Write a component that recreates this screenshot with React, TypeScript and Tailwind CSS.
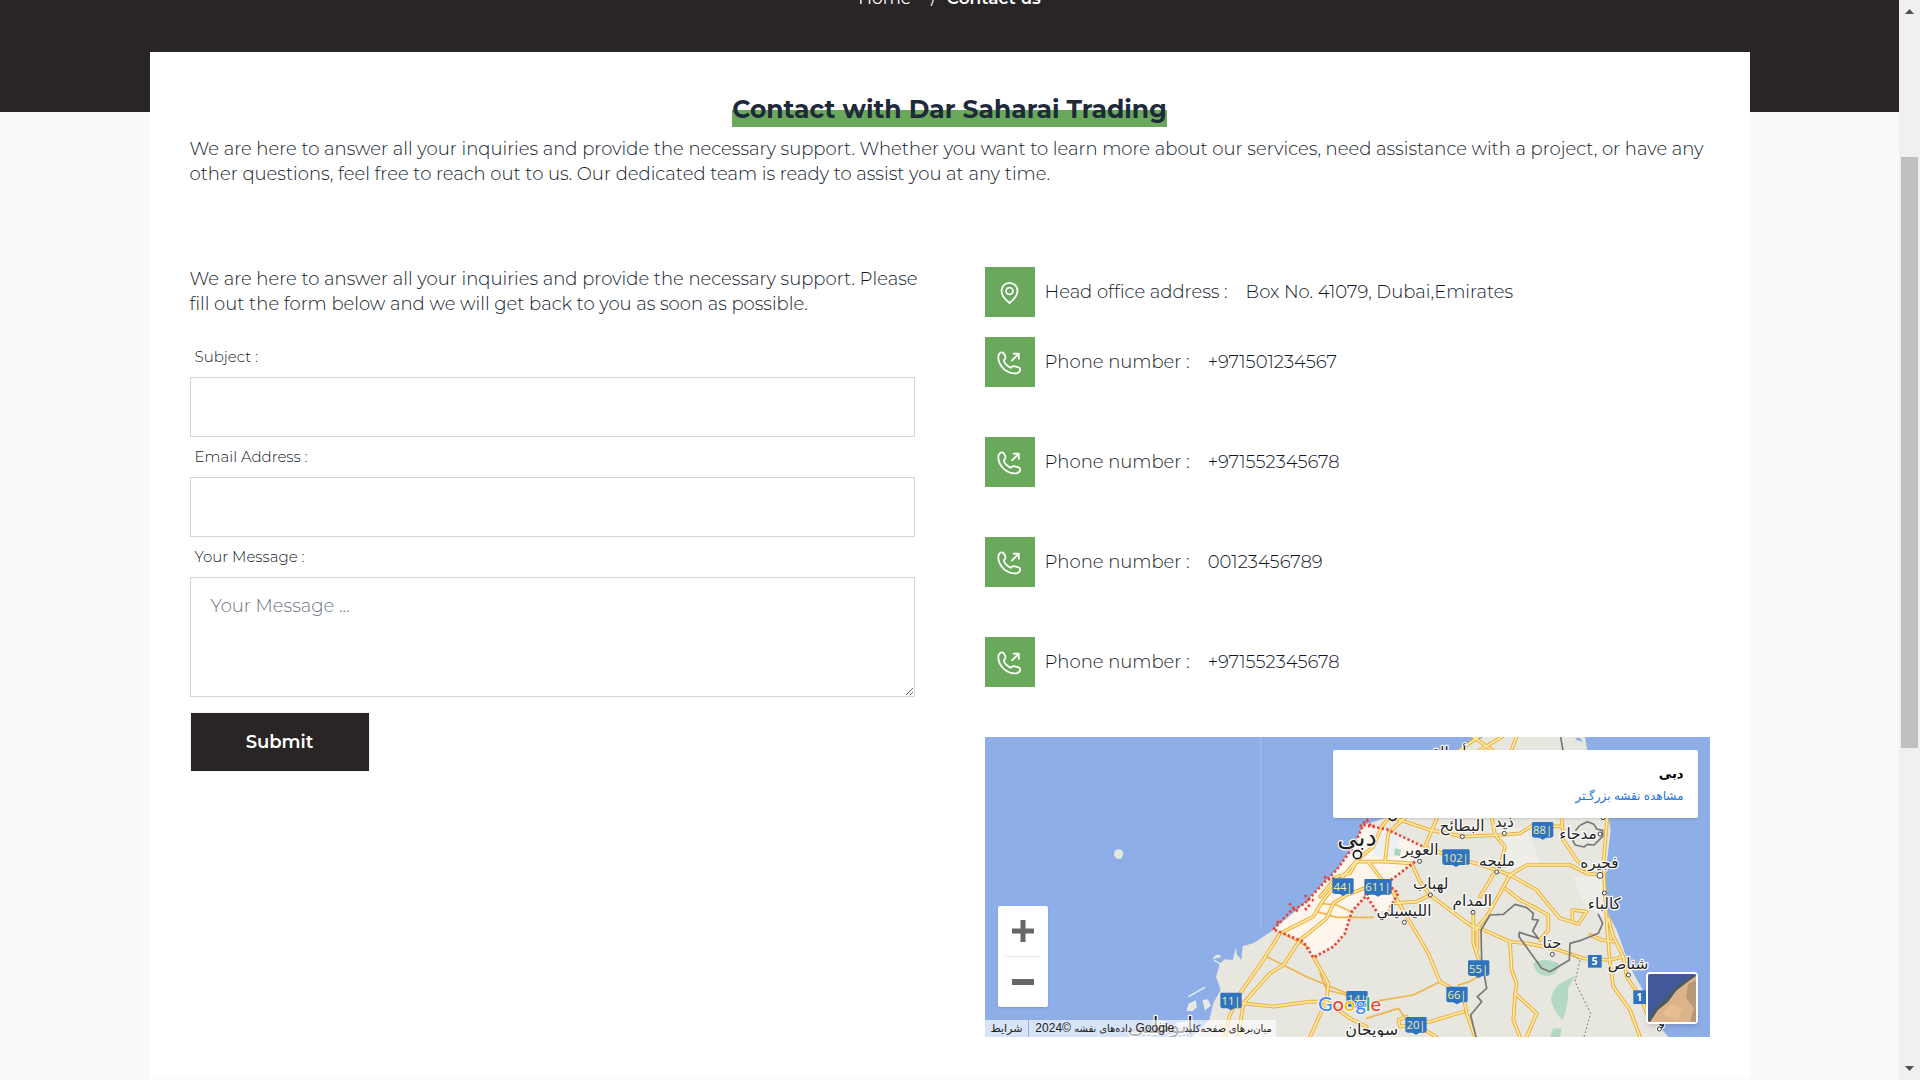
import React from "react";

const phones = ["+971501234567", "+971552345678", "00123456789", "+971552345678"];

const land =
  "M490 21 L400 70 L290 180 L195 265 L130 285 L100 350 L50 420 L0 470 L-45 520 L-140 600 L-200 640 L-232 648 L-236 690 L-250 672 L-252 650 L-262 690 L-285 688 L-300 700 L-312 740 L-298 780 L-320 820 L-332 870 L-385 921 L1045 921 L1010 880 L980 800 L940 730 L915 670 L890 600 L858 540 L858 420 L872 300 L866 265 L830 150 L802 62 L795 21 Z";

const highways = [
  "M-285 921 L-272 860 L-240 790 L-170 690 L-120 610 L-20 560 L10 510 L60 450 L110 392 L160 350 L185 290 L240 220",
  "M-245 921 L-230 820 L-150 730 L-110 705 L-60 630 L20 565 L40 520 L80 495 L140 472",
  "M110 395 L195 395 L275 400 L300 455 L330 495",
  "M195 395 L205 310 L255 262",
  "M145 395 L190 455",
  "M0 500 L50 440 L90 430 L110 395",
  "M215 480 L260 560 L290 610 L325 670 L360 755 L430 795 L440 850 L465 921",
  "M215 262 L330 300 L430 320 L540 315 L600 310 L640 285 L725 290",
  "M352 262 L315 350 L380 375 L500 410 L570 435 L620 405 L750 405 L800 430 L840 435",
  "M515 262 L525 315 L555 350 L545 390 L510 450 L480 500",
  "M570 435 L545 480 L500 560 L465 600",
  "M570 435 L650 480 L690 530 L720 565 L775 582 L800 545 L757 540 L757 570",
  "M555 475 L600 510 L640 530 L685 555 L685 600 L660 630",
  "M725 262 L730 330 L770 390 L800 420",
  "M862 262 L850 400 L855 490 L862 600 L870 700 L880 770 L930 840 L960 921",
  "M910 680 L870 690 L790 685 L700 655 L620 640 L570 635 L480 595 L450 585 L330 495 L290 515 L220 520",
  "M570 635 L575 720 L590 760 L585 800 L580 870 L600 921",
  "M585 790 L650 850 L620 921",
  "M460 550 L460 640 L480 700",
  "M472 590 L472 660",
  "M865 565 L880 620 L910 680 L920 740 L960 800 L990 870",
  "M810 615 L845 630 L880 635",
  "M-20 680 L25 760 L20 810 L-30 921",
  "M-230 820 L-140 830 L-30 815 L20 815 L90 865 L140 890",
  "M430 845 L330 875 L240 890 L235 870 L260 860",
  "M280 880 L350 921",
  "M370 90 L420 60 L475 21",
  "M440 90 L480 60 L545 21",
  "M460 21 L530 70",
  "M570 70 L590 21",
];

const sideRoads = [
  "M-160 680 L-40 740 L80 790",
  "M-120 605 L-30 655",
  "M360 755 L280 795 L160 815",
  "M415 765 L450 755 L480 735",
  "M140 865 L235 835 L260 870 L290 910",
  "M0 730 L20 780 L80 795",
  "M0 520 L50 525 L100 548",
  "M-10 545 L50 562 L160 562",
];

const border =
  "M468 921 L452 855 L485 815 L472 800 L500 775 L485 690 L483 600 L510 555 L550 553 L585 523 L620 533 L640 550 L637 568 L655 570 L638 603 L655 625 L598 607 L597 620 L665 715 L690 725 L748 690 L750 640 L780 632 L835 610 L848 580 L835 553";

const shields = [
  { x: 69, y: 470, text: "44|" },
  { x: 174, y: 472, text: "611|" },
  { x: 408, y: 383, text: "102|" },
  { x: 668, y: 301, text: "88|" },
  { x: 476, y: 716, text: "55|" },
  { x: 411, y: 795, text: "66|" },
  { x: 288, y: 886, text: "20|" },
  { x: 111, y: 808, text: "14|" },
  { x: -267, y: 813, text: "11|" },
];

const places = [
  { x: 426, y: 304, text: "البطائح", dot: [427, 320] },
  { x: 553, y: 292, text: "ذيد", dot: [553, 310] },
  { x: 774, y: 328, text: "مدحاء", dot: [840, 312] },
  { x: 300, y: 375, text: "العوير", dot: [299, 394] },
  { x: 531, y: 408, text: "مليحه", dot: [530, 426] },
  { x: 838, y: 413, text: "فجيره", dot: [840, 436] },
  { x: 332, y: 476, text: "لهباب", dot: [331, 495] },
  { x: 457, y: 528, text: "المدام", dot: [459, 547] },
  { x: 853, y: 537, text: "كالباء", dot: [853, 489] },
  { x: 252, y: 558, text: "الليسيلي", dot: [253, 577] },
  { x: 696, y: 654, text: "حتا", dot: [697, 673] },
  { x: 924, y: 716, text: "شناص", dot: [925, 735] },
];

const Shield = ({ x, y, text }: { x: number; y: number; text: string }) => {
  const half = text.length > 3 ? 41 : 32;
  return (
    <g>
      <path
        d={`M${x - half} ${y - 22} q0 -3 4 -3 h${half * 2 - 8} q4 0 4 3 v36 q0 8 -9 8 h-${half - 20} l-11 6 l-11 -6 h-${half - 20} q-9 0 -9 -8 z`}
        fill="#2f74c0"
      />
      <text x={x} y={y + 12} fill="#f2ec9a" fontSize="34" fontWeight="500" textAnchor="middle">
        {text}
      </text>
    </g>
  );
};

const MapDrawing = () => (
  <svg
    viewBox="-1005 21 2175 900"
    preserveAspectRatio="xMidYMid slice"
    className="block h-full w-full font-['Open_Sans','DejaVu_Sans',sans-serif]"
  >
    <rect x="-1005" y="21" width="2175" height="900" fill="#8eaee8" />
    <path d="M-178 21 V600" stroke="#a3bdec" strokeWidth="3" />
    <path d="M-616 362 l8 -4 l14 2 l4 12 l-6 14 l-14 0 l-8 -10 z" fill="#e4e6e0" />
    <path d={land} fill="#e7e6df" />
    <path d="M530 300 L620 290 L660 400 L560 420 Z M760 440 L850 440 L850 560 L790 520 Z" fill="#efede7" />
    <path
      d="M-398 840 l6 -18 l18 -8 l2 18 l-12 10 z M-350 812 l12 -2 l8 16 l-14 12 z M-395 800 l50 -28 M-320 686 q14 -18 22 -4 M-318 690 l30 20 M-430 880 l40 -6 l10 10 l-30 14 z M-490 876 l30 0"
      fill="#e7e6df"
      stroke="#e9efef"
      strokeWidth="4"
    />
    <path d="M765 25 l14 -2 l10 12 l-18 -4 z" fill="#8eaee8" />

    {/* reserves */}
    <g fill="#b3d9c4">
      <path d="M640 700 q30 -20 75 0 q5 30 -30 38 q-40 0 -45 -38 z" />
      <path d="M765 738 q-10 20 -22 40 q5 40 -15 92 q-25 -20 -35 -60 q5 -40 35 -55 z" />
      <path d="M700 895 l25 0 l-5 26 h-30 z" />
    </g>

    {/* Dubai emirate */}
    <path
      d="M130 285 L200 298 L310 350 L285 395 L200 460 L235 490 L205 540 L170 545 L135 495 L95 545 L75 610 L40 650 L-20 683 L-50 635 L-140 598 L-45 520 L10 460 L50 420 L100 350 Z"
      fill="#fef5ec"
    />
    <path d="M165 300 L240 315 L230 380 L160 380 Z" fill="#edf0f2" />
    <path d="M225 355 l18 4 l-3 20 l-18 -4 z" fill="#a9d6bf" />

    <g fill="none" strokeLinejoin="round" strokeLinecap="round">
      {sideRoads.map((d) => (
        <path key={d} d={d} stroke="#f0b548" strokeWidth="5" />
      ))}
      {highways.map((d) => (
        <path key={d} d={d} stroke="#eeae3a" strokeWidth="11" />
      ))}
      {highways.map((d) => (
        <path key={d} d={d} stroke="#fdeba8" strokeWidth="5" />
      ))}
      <path d={border} stroke="#777" strokeWidth="5" />
      <path
        d="M722 21 L732 80 M782 285 l20 -10 l20 8 l8 14 l18 4 l0 18 l-26 26 l-20 -2 l-10 8 l-26 -6 l-8 -14 M768 300 l10 -12"
        stroke="#777"
        strokeWidth="5"
      />
      <path d="M752 670 L780 690 L765 755 L812 850 L792 921" stroke="#777" strokeWidth="3" strokeDasharray="3 9" />
    </g>

    <g fill="none" stroke="#ea4335" strokeWidth="8" strokeDasharray="7 7">
      <path d="M-140 598 L-90 545 L-45 520 L10 460 L50 420 L100 350 L130 285 L200 298 L310 350" />
      <path d="M285 395 L200 460 L235 490 L205 540 M135 490 L170 545" />
      <path d="M145 490 L95 545 L75 610 L40 650 L-20 683 L-50 635 L-140 598" />
      <path d="M120 290 l20 -20 l14 20 l14 -4 M-92 520 l12 14 l14 10 M-45 495 l10 14 l16 2 M-45 540 l16 -18 M12 440 l20 10 l10 -6 M-130 575 l10 4" />
    </g>

    {shields.map((s) => (
      <Shield key={s.text} {...s} />
    ))}
    <g fill="#2f74c0">
      <rect x="804" y="675" width="41" height="38" />
      <rect x="940" y="781" width="38" height="41" />
    </g>
    <g fill="#fff" fontSize="32" fontWeight="700" textAnchor="middle">
      <text x="824" y="706">5</text>
      <text x="958" y="813">1</text>
    </g>

    <g
      fill="#222"
      fontSize="46"
      textAnchor="middle"
      stroke="#fff"
      strokeWidth="7"
      strokeLinejoin="round"
      paintOrder="stroke"
    >
      {places.map((p) => (
        <text key={p.text} x={p.x} y={p.y}>
          {p.text}
        </text>
      ))}
      <text x="111" y="348" fontSize="76">دبی</text>
      <text x="155" y="916" fontSize="48">سویحان</text>
      <text x="-480" y="908" fontSize="66">ابوظبی</text>
      <text x="345" y="84">أم القیوین</text>
      <text x="1024" y="888">و</text>
    </g>
    <g fill="#fff" stroke="#444" strokeWidth="3">
      {places.map((p) => (
        <circle key={p.text} cx={p.dot[0]} cy={p.dot[1]} r="6" />
      ))}
      <circle cx="849" cy="263" r="6" />
      <circle cx="1018" cy="897" r="6" />
      <circle cx="840" cy="436" r="9" />
      <circle cx="218" cy="260" r="11" stroke="#111" strokeWidth="5" />
      <circle cx="112" cy="374" r="12" stroke="#111" strokeWidth="5" />
    </g>

    <text
      x="-6"
      y="842"
      fontSize="60"
      fontWeight="500"
      stroke="#fff"
      strokeWidth="5"
      paintOrder="stroke"
      className="font-[Lato,sans-serif]"
    >
      <tspan fill="#4285f4">G</tspan>
      <tspan fill="#ea4335">o</tspan>
      <tspan fill="#fbbc04">o</tspan>
      <tspan fill="#4285f4">g</tspan>
      <tspan fill="#34a853">l</tspan>
      <tspan fill="#ea4335">e</tspan>
    </text>
  </svg>
);

const LocationMap = () => (
  <div className="relative h-[300px] overflow-hidden font-['Liberation_Sans','DejaVu_Sans',sans-serif] font-normal">
    <MapDrawing />

    <div
      dir="rtl"
      className="absolute top-[13px] right-3 flex h-[68px] w-[365px] flex-col justify-center rounded-xs bg-white px-3.5 shadow"
    >
      <p className="text-[13px] leading-6 font-bold text-black">دبی</p>
      <a href="#map" className="text-[12px] leading-5 text-[#1a73e8]">
        مشاهده نقشه بزرگـتر
      </a>
    </div>

    <div className="absolute bottom-[30px] left-[13px] flex h-[101px] w-[50px] flex-col items-center rounded-xs bg-white shadow">
      <button type="button" aria-label="Zoom in" className="flex w-full flex-1 items-center justify-center">
        <svg viewBox="0 0 22 22" className="size-[22px]" fill="#666">
          <path d="M8.500 0h5v8.500H22v5h-8.500V22h-5v-8.500H0v-5h8.500z" />
        </svg>
      </button>
      <div className="h-px w-9 bg-[#e6e6e6]" />
      <button type="button" aria-label="Zoom out" className="flex w-full flex-1 items-center justify-center">
        <svg viewBox="0 0 22 22" className="size-[22px]" fill="#666">
          <path d="M0 8h22v6H0z" />
        </svg>
      </button>
    </div>

    <button
      type="button"
      aria-label="Satellite"
      className="absolute right-3 bottom-[13px] size-[52px] overflow-hidden rounded-sm border-2 border-white shadow-md"
    >
      <svg viewBox="0 0 48 48" className="size-full">
        <rect width="48" height="48" fill="#43589b" />
        <path d="M0 44 L8 34 L18 24 L26 15 L36 7 L48 0 V48 H0 Z" fill="#4b5c5c" />
        <path d="M2 48 L10 36 L20 28 L28 17 L38 9 L48 2 V48 Z" fill="#dcb48c" />
        <path d="M40 10 L48 6 V48 H42 L46 34 L38 24 Z" fill="#b99878" />
        <path d="M14 40 L24 30 L34 34 L30 46 Z" fill="#e8bd92" />
      </svg>
    </button>

    <div dir="rtl" className="absolute bottom-0 left-0 flex h-[17px] items-center bg-white/65 text-[12px] text-[#222]">
      <span className="px-1 text-[10px]">میان‌برهای صفحه‌کلید</span>
      <span className="px-1.5">
        Google <span className="text-[10px]">داده‌های نقشه</span> ©2024
      </span>
      <a href="#terms" className="border-r border-[#8eaee8] px-1.5 text-[11px]">
        شرایط
      </a>
    </div>
  </div>
);

const PinIcon = () => (
  <svg viewBox="0 0 50 50" className="size-[50px]" fill="none" stroke="currentColor" strokeWidth="1.800" strokeLinejoin="round">
    <path d="M24.500 36 C20 32.500 16.500 28.500 16.500 23.800 A8 8 0 0 1 32.500 23.800 C32.500 28.500 29 32.500 24.500 36 Z" />
    <circle cx="24.500" cy="24" r="3.400" />
  </svg>
);

const PhoneIcon = () => (
  <svg
    viewBox="0 0 50 50"
    className="size-[50px]"
    fill="none"
    stroke="currentColor"
    strokeWidth="1.800"
    strokeLinecap="round"
    strokeLinejoin="round"
  >
    <path d="M14.800 16.200 Q16.800 14.600 18.600 16 Q20.200 18.200 20.500 20.500 Q20.300 22 19 23.200 Q18.800 25 21 27.400 Q23.600 30 25.800 30.800 Q27 29.200 28.600 29.200 L33.600 30.300 Q35.400 31 35.200 33 Q34.600 35.600 32 36.100 Q25.500 37.200 19.500 32.600 Q13.200 27 13.300 20 Q13.400 17.600 14.800 16.200 Z" />
    <path d="M27 23.400 L33.600 16.800 M28.600 16.600 H33.800 V21.800" />
  </svg>
);

const ContactForm = () => (
  <form className="flex flex-col" onSubmit={(e) => e.preventDefault()}>
    <p className="-mr-2.5 mb-[30px]">
      We are here to answer all your inquiries and provide the necessary support. Please fill out the form below and
      we will get back to you as soon as possible.
    </p>
    <label htmlFor="subject" className="mb-2.5 pl-[5px] text-[15px] leading-5">
      Subject :
    </label>
    <input id="subject" type="text" className="mb-2.5 h-[60px] border border-gray-300 px-5" />
    <label htmlFor="email" className="mb-2.5 pl-[5px] text-[15px] leading-5">
      Email Address :
    </label>
    <input id="email" type="email" className="mb-2.5 h-[60px] border border-gray-300 px-5" />
    <label htmlFor="message" className="mb-2.5 pl-[5px] text-[15px] leading-5">
      Your Message :
    </label>
    <textarea
      id="message"
      placeholder="Your Message ..."
      className="mb-[15px] h-[120px] resize border border-gray-300 px-5 py-4 placeholder:text-gray-500"
    />
    <button
      type="submit"
      className="h-[60px] w-[180px] border border-gray-100 bg-[#292526] font-semibold text-white"
    >
      Submit
    </button>
  </form>
);

const ContactRow = ({ icon, label, children }: { icon: React.ReactNode; label: string; children: React.ReactNode }) => (
  <div className="flex items-center">
    <span className="mr-2.5 bg-[#6aa95c] text-white">{icon}</span>
    <span className="mr-[18px]">{label} :</span>
    {children}
  </div>
);

const Scrollbar = () => (
  <div className="flex h-full w-[21px] shrink-0 flex-col items-center bg-[#f1eff0]">
    <svg viewBox="0 0 9 5" className="mt-[9px] h-[5px] w-[9px]" fill="#505050">
      <path d="M0 5 L4.500 0 L9 5 Z" />
    </svg>
    <div className="mt-[143px] h-[591px] w-[17px] bg-[#c1bfc0]" />
    <svg viewBox="0 0 9 5" className="mt-auto mb-[9px] h-[5px] w-[9px]" fill="#505050">
      <path d="M0 0 L4.500 5 L9 0 Z" />
    </svg>
  </div>
);

const App: React.FC = () => {
  return (
    <div className="flex h-screen overflow-hidden bg-[#fafafa] font-[Montserrat,Inter,sans-serif] text-[18px] leading-[25px] font-light text-gray-900">
      <div className="flex-1 overflow-hidden">
        <header className="flex h-28 flex-col items-center justify-end overflow-hidden bg-[#292526] pb-[101px] text-white">
          <nav className="flex text-[17px] font-normal">
            <a href="#home">Home</a>
            <span className="mr-2.5 ml-5">/</span>
            <a href="#contact" className="font-semibold">
              Contact us
            </a>
          </nav>
        </header>

        <main className="relative mx-auto -mt-[60px] max-w-[1600px] bg-white p-10">
          <h1 className="text-center text-[25px] leading-[35px] font-bold text-gray-800">
            <span className="inline-block bg-linear-to-b from-transparent from-50% to-[#6aa95c] to-50%">
              Contact with Dar Saharai Trading
            </span>
          </h1>
          <p className="mt-2.5 mb-20">
            We are here to answer all your inquiries and provide the necessary support. Whether you want to learn more
            about our services, need assistance with a project, or have any other questions, feel free to reach out to
            us. Our dedicated team is ready to assist you at any time.
          </p>

          <div className="grid grid-cols-2 gap-[70px]">
            <ContactForm />
            <div className="flex flex-col">
              <ContactRow icon={<PinIcon />} label="Head office address">
                <span>Box No. 41079, Dubai,Emirates</span>
              </ContactRow>
              <div className="my-5 flex flex-col gap-[50px] pb-[30px]">
                {phones.map((phone, i) => (
                  <ContactRow key={i} icon={<PhoneIcon />} label="Phone number">
                    <a href={`tel:${phone}`}>{phone}</a>
                  </ContactRow>
                ))}
              </div>
              <LocationMap />
            </div>
          </div>
        </main>
      </div>
      <Scrollbar />
    </div>
  );
};

export default App;
